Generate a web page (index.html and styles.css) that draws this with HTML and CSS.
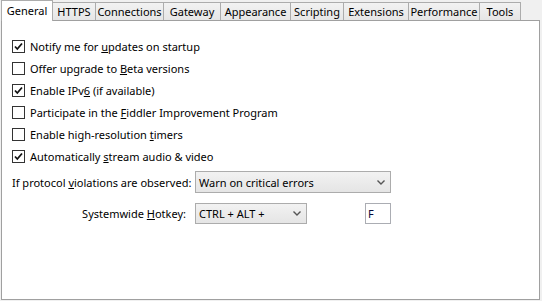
FILE: index.html
```html
<!DOCTYPE html>
<html>
<head>
<meta charset="utf-8">
<link rel="stylesheet" href="styles.css">
</head>
<body>
<div class="window">
  <div class="tabs">
    <div class="tab active t-general">General</div>
    <div class="tab t-https">HTTPS</div>
    <div class="tab t-connections">Connections</div>
    <div class="tab t-gateway">Gateway</div>
    <div class="tab t-appearance">Appearance</div>
    <div class="tab t-scripting">Scripting</div>
    <div class="tab t-extensions">Extensions</div>
    <div class="tab t-performance">Performance</div>
    <div class="tab t-tools">Tools</div>
  </div>
  <div class="panel">
    <div class="checks">
      <div class="check-row"><span class="box checked"><svg viewBox="0 0 11 11" width="11" height="11"><path d="M2 5.5 L4.3 8 L9 2.5" fill="none" stroke="#111" stroke-width="1.8"/></svg></span><span>Notify me for <u>u</u>pdates on startup</span></div>
      <div class="check-row"><span class="box"></span><span>Offer upgrade to <u>B</u>eta versions</span></div>
      <div class="check-row"><span class="box checked"><svg viewBox="0 0 11 11" width="11" height="11"><path d="M2 5.5 L4.3 8 L9 2.5" fill="none" stroke="#111" stroke-width="1.8"/></svg></span><span>Enable IPv<u>6</u> (if available)</span></div>
      <div class="check-row"><span class="box"></span><span>Participate in the <u>F</u>iddler Improvement Program</span></div>
      <div class="check-row"><span class="box"></span><span>Enable high-resolution <u>t</u>imers</span></div>
      <div class="check-row"><span class="box checked"><svg viewBox="0 0 11 11" width="11" height="11"><path d="M2 5.5 L4.3 8 L9 2.5" fill="none" stroke="#111" stroke-width="1.8"/></svg></span><span>Automatically <u>s</u>tream audio &amp; video</span></div>
    </div>
    <div class="form">
      <div class="label">If protocol <u>v</u>iolations are observed:</div>
      <div class="select wide"><span>Warn on critical errors</span><svg class="chev" viewBox="0 0 8 5" width="8" height="5"><path d="M0.5 0.5 L4 4 L7.5 0.5" fill="none" stroke="#555" stroke-width="1.4"/></svg></div>
      <div class="label">Systemwide <u>H</u>otkey:</div>
      <div class="hotkey">
        <div class="select narrow"><span>CTRL + ALT +</span><svg class="chev" viewBox="0 0 8 5" width="8" height="5"><path d="M0.5 0.5 L4 4 L7.5 0.5" fill="none" stroke="#555" stroke-width="1.4"/></svg></div>
        <div class="textbox">F</div>
      </div>
    </div>
  </div>
</div>
</body>
</html>
```

FILE: styles.css
```css
html, body {
  margin: 0;
  padding: 0;
  background: #f0f0f0;
}
body {
  font-family: "Noto Sans", "Liberation Sans", sans-serif;
  font-size: 11px;
  color: #000;
}
.window {
  width: 542px;
  height: 301px;
  overflow: hidden;
}
.tabs {
  display: flex;
  align-items: flex-end;
  height: 20px;
  padding-left: 1px;
}
.tab {
  box-sizing: border-box;
  height: 18px;
  border: 1px solid #acacac;
  border-bottom: none;
  background: linear-gradient(#f2f2f2, #e6e6e6);
  margin-left: -1px;
  text-align: center;
  line-height: 17px;
  padding-top: 0;
  white-space: nowrap;
}
.tab:first-child { margin-left: 0; }
.tab.active {
  height: 21px;
  margin-bottom: -1px;
  background: #fff;
  position: relative;
  z-index: 2;
  line-height: 19px;
  padding-top: 0;
}
.t-general { width: 52px; }
.t-https { width: 44px; }
.t-connections { width: 69px; }
.t-gateway { width: 58px; }
.t-appearance { width: 71px; }
.t-scripting { width: 54px; }
.t-extensions { width: 66px; }
.t-performance { width: 72px; }
.t-tools { width: 42px; }
.panel {
  box-sizing: border-box;
  margin-left: 1px;
  width: 539px;
  height: 280px;
  border: 1px solid #a0a0a0;
  background: #fff;
  padding: 14px 0 0 10px;
}
.check-row {
  display: flex;
  align-items: center;
  gap: 5px;
  height: 22px;
  white-space: nowrap;
}
.box {
  box-sizing: border-box;
  width: 13px;
  height: 13px;
  border: 1px solid #333;
  background: #fff;
  display: flex;
  align-items: center;
  justify-content: center;
}
.box svg { display: block; }
.form {
  margin-top: 4px;
  display: grid;
  grid-template-columns: 183px 196px;
  grid-auto-rows: 22px;
  row-gap: 9px;
  align-items: center;
}
.label {
  text-align: right;
  padding-right: 9px;
  white-space: nowrap;
}
.select {
  box-sizing: border-box;
  height: 22px;
  border: 1px solid #acacac;
  background: linear-gradient(#f2f2f2, #e5e5e5);
  display: flex;
  align-items: center;
  justify-content: space-between;
  padding: 0 5px 0 3px;
}
.narrow { width: 112px; height: 21px; }
.hotkey {
  display: flex;
  justify-content: space-between;
  align-items: center;
}
.textbox {
  box-sizing: border-box;
  width: 26px;
  height: 21px;
  border: 1px solid #abadb3;
  background: #fff;
  padding-left: 2px;
  line-height: 19px;
  color: #0a0a3a;
}
.chev { display: block; }
```
